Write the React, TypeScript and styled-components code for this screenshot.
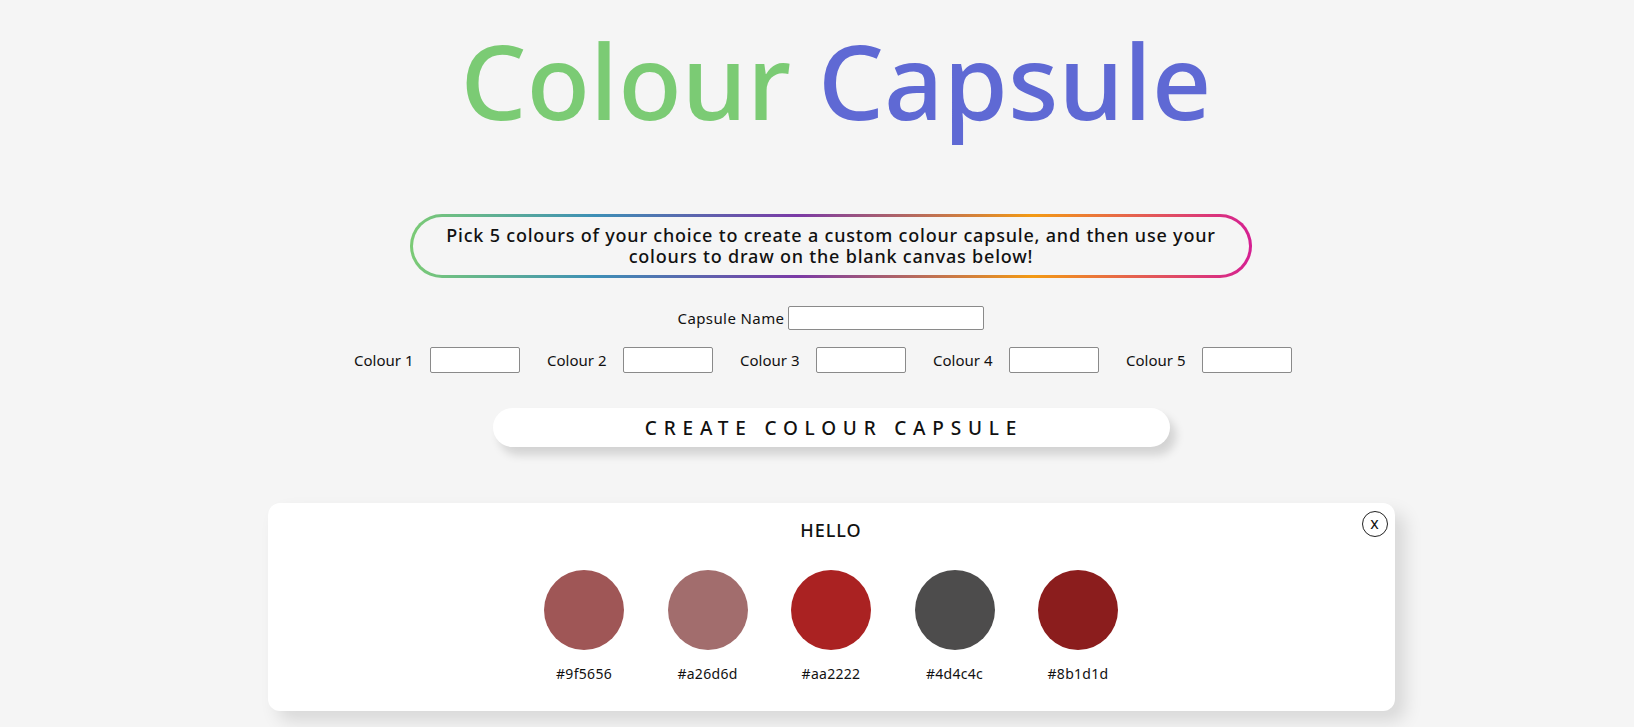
import React from "react";
import styled, { createGlobalStyle } from "styled-components";

const GlobalStyle = createGlobalStyle`
  html, body {
    margin: 0;
    padding: 0;
    background: #f5f5f5;
  }
  body {
    font-family: "Noto Sans", "DejaVu Sans", sans-serif;
    color: #111;
  }
`;

const Page = styled.div`
  box-sizing: border-box;
  min-height: 727px;
  padding: 0 0 16px 28px;
  display: flex;
  flex-direction: column;
  align-items: center;
`;

const Title = styled.h1`
  margin: 15px 0 0 10px;
  font-size: 104px;
  font-weight: 500;
  line-height: 130px;
  letter-spacing: 0;
  white-space: nowrap;
`;

const Word = styled.span<{ $color: string }>`
  color: ${(p) => p.$color};
`;

const InfoBox = styled.div`
  box-sizing: border-box;
  margin-top: 69px;
  width: 842px;
  height: 64px;
  border: 3px solid transparent;
  border-radius: 34px;
  background:
    linear-gradient(#f5f5f5, #f5f5f5) padding-box,
    linear-gradient(
        to right,
        #7bcb75 0%,
        #3d8fb6 22%,
        #7b3aa6 46%,
        #f39a14 74%,
        #d51f92 100%
      )
      border-box;
  display: flex;
  align-items: center;
  justify-content: center;
  text-align: center;
  font-size: 18px;
  line-height: 21px;
  font-weight: 500;
  letter-spacing: 0.8px;
`;

const NameRow = styled.div`
  margin-top: 28px;
  display: flex;
  align-items: center;
  gap: 4px;
  font-size: 15px;
  letter-spacing: 0.4px;
`;

const TextInput = styled.input<{ $w: number; $h: number }>`
  box-sizing: border-box;
  width: ${(p) => p.$w}px;
  height: ${(p) => p.$h}px;
  margin: 0;
  border: 1px solid #8a8a8a;
  border-radius: 2px;
  background: #fff;
  padding: 1px 4px;
  font: inherit;
`;

const ColourRow = styled.div`
  margin: 17px 16px 0 0;
  display: flex;
  align-items: center;
  gap: 27px;
`;

const ColourGroup = styled.div`
  display: flex;
  align-items: center;
`;

const ColourLabel = styled.label`
  width: 76px;
  font-size: 15px;
`;

const CreateButton = styled.button`
  margin-top: 35px;
  width: 677px;
  height: 39px;
  border: none;
  border-radius: 20px;
  background: #fff;
  box-shadow: 6px 8px 10px rgba(0, 0, 0, 0.14);
  font-family: "Noto Sans", sans-serif;
  font-size: 19px;
  font-weight: 500;
  letter-spacing: 6.8px;
  color: #111;
  padding: 0 0 0 6px;
  cursor: pointer;
`;

const Card = styled.section`
  position: relative;
  box-sizing: border-box;
  margin-top: 56px;
  width: 1127px;
  height: 208px;
  background: #fff;
  border-radius: 12px;
  box-shadow: 10px 10px 18px rgba(0, 0, 0, 0.12);
  padding-top: 16px;
  display: flex;
  flex-direction: column;
  align-items: center;
`;

const CardTitle = styled.h2`
  margin: 0;
  font-size: 18px;
  line-height: 22px;
  font-weight: 500;
  letter-spacing: 1px;
`;

const CloseButton = styled.button`
  position: absolute;
  top: 8px;
  right: 7px;
  width: 26px;
  height: 26px;
  border-radius: 50%;
  border: 1px solid #222;
  background: #fff;
  padding: 0 0 2px;
  font-family: "Noto Sans", sans-serif;
  font-size: 16px;
  line-height: 1;
  color: #111;
  display: flex;
  align-items: center;
  justify-content: center;
`;

const Swatches = styled.div`
  margin-top: 29px;
  display: flex;
  gap: 43.5px;
`;

const Swatch = styled.div`
  display: flex;
  flex-direction: column;
  align-items: center;
  width: 80px;
`;

const Dot = styled.div<{ $c: string }>`
  width: 80px;
  height: 80px;
  border-radius: 50%;
  background: ${(p) => p.$c};
`;

const Hex = styled.span`
  margin-top: 14px;
  font-size: 14px;
  line-height: 20px;
  letter-spacing: 0.3px;
  white-space: nowrap;
`;

const colours = ["#9f5656", "#a26d6d", "#aa2222", "#4d4c4c", "#8b1d1d"];

export default function App() {
  return (
    <>
      <GlobalStyle />
      <Page>
        <Title>
          <Word $color="#7bcb74">Colour</Word> <Word $color="#5f69d4">Capsule</Word>
        </Title>
        <InfoBox>
          <div>
            Pick 5 colours of your choice to create a custom colour capsule, and then use your
            <br />
            colours to draw on the blank canvas below!
          </div>
        </InfoBox>
        <NameRow>
          <label htmlFor="capname">Capsule Name</label>
          <TextInput id="capname" type="text" $w={196} $h={24} />
        </NameRow>
        <ColourRow>
          {[1, 2, 3, 4, 5].map((n) => (
            <ColourGroup key={n}>
              <ColourLabel htmlFor={`c${n}`}>Colour {n}</ColourLabel>
              <TextInput id={`c${n}`} type="text" $w={90} $h={26} />
            </ColourGroup>
          ))}
        </ColourRow>
        <CreateButton>CREATE COLOUR CAPSULE</CreateButton>
        <Card>
          <CloseButton aria-label="close">x</CloseButton>
          <CardTitle>HELLO</CardTitle>
          <Swatches>
            {colours.map((c) => (
              <Swatch key={c}>
                <Dot $c={c} />
                <Hex>{c}</Hex>
              </Swatch>
            ))}
          </Swatches>
        </Card>
      </Page>
    </>
  );
}
